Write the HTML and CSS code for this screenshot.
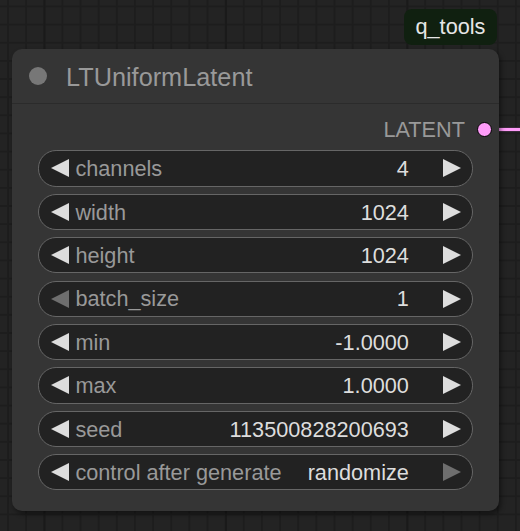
FILE: index.html
```html
<!DOCTYPE html>
<html>
<head>
<meta charset="utf-8">
<link rel="stylesheet" href="styles.css">
</head>
<body>
<div class="canvas">
  <div class="link"></div>
  <div class="badge">q_tools</div>
  <div class="node">
    <div class="title">
      <span class="dot"></span>
      <span class="title-text">LTUniformLatent</span>
    </div>
    <div class="body">
      <div class="output">
        <span class="out-label">LATENT</span>
        <span class="slot"></span>
      </div>
      <div class="widgets">
        <div class="widget">
          <svg class="arrow" viewBox="0 0 18 18"><polygon points="18,0 0,9 18,18"/></svg>
          <span class="label">channels</span>
          <span class="value">4</span>
          <svg class="arrow" viewBox="0 0 18 18"><polygon points="0,0 18,9 0,18"/></svg>
        </div>
        <div class="widget">
          <svg class="arrow" viewBox="0 0 18 18"><polygon points="18,0 0,9 18,18"/></svg>
          <span class="label">width</span>
          <span class="value">1024</span>
          <svg class="arrow" viewBox="0 0 18 18"><polygon points="0,0 18,9 0,18"/></svg>
        </div>
        <div class="widget">
          <svg class="arrow" viewBox="0 0 18 18"><polygon points="18,0 0,9 18,18"/></svg>
          <span class="label">height</span>
          <span class="value">1024</span>
          <svg class="arrow" viewBox="0 0 18 18"><polygon points="0,0 18,9 0,18"/></svg>
        </div>
        <div class="widget">
          <svg class="arrow dim" viewBox="0 0 18 18"><polygon points="18,0 0,9 18,18"/></svg>
          <span class="label">batch_size</span>
          <span class="value">1</span>
          <svg class="arrow" viewBox="0 0 18 18"><polygon points="0,0 18,9 0,18"/></svg>
        </div>
        <div class="widget">
          <svg class="arrow" viewBox="0 0 18 18"><polygon points="18,0 0,9 18,18"/></svg>
          <span class="label">min</span>
          <span class="value">-1.0000</span>
          <svg class="arrow" viewBox="0 0 18 18"><polygon points="0,0 18,9 0,18"/></svg>
        </div>
        <div class="widget">
          <svg class="arrow" viewBox="0 0 18 18"><polygon points="18,0 0,9 18,18"/></svg>
          <span class="label">max</span>
          <span class="value">1.0000</span>
          <svg class="arrow" viewBox="0 0 18 18"><polygon points="0,0 18,9 0,18"/></svg>
        </div>
        <div class="widget">
          <svg class="arrow" viewBox="0 0 18 18"><polygon points="18,0 0,9 18,18"/></svg>
          <span class="label">seed</span>
          <span class="value">113500828200693</span>
          <svg class="arrow" viewBox="0 0 18 18"><polygon points="0,0 18,9 0,18"/></svg>
        </div>
        <div class="widget">
          <svg class="arrow" viewBox="0 0 18 18"><polygon points="18,0 0,9 18,18"/></svg>
          <span class="label">control after generate</span>
          <span class="value">randomize</span>
          <svg class="arrow dim" viewBox="0 0 18 18"><polygon points="0,0 18,9 0,18"/></svg>
        </div>
      </div>
    </div>
  </div>
</div>
</body>
</html>
```

FILE: styles.css
```css
html, body {
  margin: 0;
  padding: 0;
}
body {
  width: 520px;
  height: 531px;
  overflow: hidden;
  font-family: "Liberation Sans", Arial, sans-serif;
}
.canvas {
  position: relative;
  width: 520px;
  height: 531px;
  background-color: #232323;
  background-image:
    linear-gradient(to right, #1a1a1a 0 2px, transparent 2px),
    linear-gradient(to right, #1d1d1d 0 1.5px, transparent 1.5px),
    linear-gradient(to bottom, #1d1d1d 0 1.5px, transparent 1.5px);
  background-size: 181.5px 100%, 18.15px 100%, 100% 18.15px;
  background-position: 43.5px 0, 7px 0, 0 5.5px;
  overflow: hidden;
}
.link {
  position: absolute;
  left: 484px;
  top: 126.5px;
  width: 60px;
  height: 3px;
  background: #ff9cf9;
  border-top: 1px solid #3a2a3a;
  border-bottom: 1px solid #3a2a3a;
}
.badge {
  position: absolute;
  left: 404px;
  top: 9px;
  height: 36px;
  line-height: 36px;
  padding: 0 12px 0 11.5px;
  background: #102010;
  border-radius: 8px;
  color: #e6e6e6;
  font-size: 21.7px;
}
.node {
  position: absolute;
  left: 12px;
  top: 49px;
  width: 487px;
  height: 462px;
  background: #353535;
  border-radius: 10px;
  box-shadow: 2px 3px 5px rgba(0, 0, 0, 0.45);
  display: flex;
  flex-direction: column;
}
.title {
  height: 54.3px;
  border-bottom: 1px solid #2b2b2b;
  display: flex;
  align-items: center;
  padding-left: 17px;
  gap: 19px;
}
.dot {
  width: 18px;
  height: 18px;
  border-radius: 50%;
  background: #777777;
  flex: none;
}
.title-text {
  font-size: 25.3px;
  color: #999999;
  line-height: 54.3px;
  padding-top: 1px;
}
.body {
  padding: 7.2px 26.3px 0 26.3px;
  display: flex;
  flex-direction: column;
}
.output {
  height: 36.2px;
  display: flex;
  align-items: center;
  justify-content: flex-end;
  margin-right: -19.3px;
  gap: 12px;
}
.out-label {
  font-size: 21.7px;
  color: #999999;
  line-height: 36.2px;
  padding-top: 2px;
}
.slot {
  width: 13px;
  height: 13px;
  border-radius: 50%;
  background: #ff9cf9;
  border: 1.6px solid #000;
  flex: none;
}
.widgets {
  margin-top: 2.7px;
  display: flex;
  flex-direction: column;
  gap: 7.23px;
}
.widget {
  box-sizing: border-box;
  height: 36.2px;
  border: 1px solid #666666;
  border-radius: 18.1px;
  background: #222222;
  display: flex;
  align-items: center;
  padding: 0 10.3px 0 11.3px;
  font-size: 21.7px;
  line-height: 34px;
}
.arrow {
  width: 18px;
  height: 18px;
  flex: none;
  fill: #dddddd;
}
.arrow.dim {
  fill: #6e6e6e;
}
.label {
  color: #999999;
  margin-left: 6.8px;
  flex: 1;
  white-space: nowrap;
  padding-top: 1.5px;
}
.value {
  color: #dddddd;
  margin-right: 34.5px;
  white-space: nowrap;
  padding-top: 1.5px;
}
```
